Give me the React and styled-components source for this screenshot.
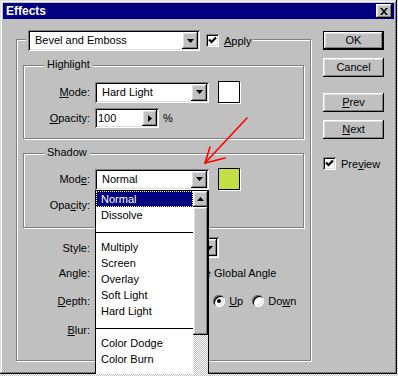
import React from "react";
import styled, { createGlobalStyle, css } from "styled-components";

const GlobalStyle = createGlobalStyle`
  html, body { margin: 0; padding: 0; }
  body {
    width: 398px; height: 376px; overflow: hidden;
    background: repeating-conic-gradient(#c0c0c0 0 25%, #ffffff 0 50%) 0 0 / 2px 2px;
    font-family: "Liberation Sans", Arial, sans-serif;
    font-size: 11px; color: #000;
  }
`;

const raised = css`
  background: #c0c0c0;
  box-shadow: inset -1px -1px #000, inset 1px 1px #fff, inset -2px -2px #808080, inset 2px 2px #dfdfdf;
`;
const sunken = css`
  box-shadow: inset 1px 1px #808080, inset -1px -1px #fff, inset 2px 2px #000, inset -2px -2px #dfdfdf;
`;
const etched = css`
  border: 1px solid #808080;
  box-shadow: inset 1px 1px #fff, 1px 1px #fff;
`;

const Window = styled.div`
  position: relative;
  width: 397px; height: 374px; box-sizing: border-box; padding: 3px;
  background: #c0c0c0;
  box-shadow: inset -1px -1px #000, inset 1px 1px #dfdfdf, inset -2px -2px #808080, inset 2px 2px #fff;
  overflow: hidden;
`;
const TitleBar = styled.div`
  height: 16px; background: #000080;
  display: flex; align-items: center; justify-content: space-between;
  padding: 0 2px 0 3px;
`;
const Title = styled.span`
  color: #fff; font-weight: bold; font-size: 12px; line-height: 16px;
`;
const CloseButton = styled.div`
  ${raised};
  width: 16px; height: 14px; display: grid; place-items: center;
`;
const Body = styled.div`
  display: flex;
`;
const Main = styled.div`
  width: 320px; box-sizing: border-box; padding: 20px 0 0 13px;
`;
const Side = styled.div`
  width: 61px; padding-top: 12px; display: flex; flex-direction: column;
`;
const OuterGroup = styled.div`
  ${etched};
  position: relative; box-sizing: border-box;
  width: 295px; height: 322px; padding: 25px 6px 0 6px;
`;
const GroupHeader = styled.div`
  position: absolute; top: -10px; left: 9px;
  display: flex; align-items: center;
  padding: 0 1px 0 2px; background: #c0c0c0;
`;
const SubGroup = styled.div`
  ${etched};
  position: relative; box-sizing: border-box;
  width: 281px; height: ${p => p.$h}px; padding-top: ${p => p.$pt}px;
  margin-top: ${p => p.$mt || 0}px;
`;
const Legend = styled.span`
  position: absolute; top: -8px; left: 20px;
  padding: 0 3px; background: #c0c0c0; line-height: 13px;
`;
const FieldGrid = styled.div`
  display: grid; grid-template-columns: 66px auto;
  column-gap: 5px; row-gap: 5px; align-items: center;
`;
const Row = styled.div`
  display: grid; grid-template-columns: 66px auto; column-gap: 5px;
  align-items: center; margin-top: ${p => p.$mt}px; padding-left: 1px;
`;
const Lower = styled.div`
  margin-top: 9px;
`;
const FieldLabel = styled.span`
  text-align: right; white-space: nowrap;
`;
const Key = styled.u`
  text-decoration: underline;
`;
const Inline = styled.div`
  display: flex; align-items: center; position: relative;
`;
const ComboBox = styled.div`
  ${sunken};
  position: relative;
  width: ${p => p.$w}px; height: 21px; box-sizing: border-box; padding: 2px;
  background: #fff; display: flex;
`;
const ComboValue = styled.span`
  flex: 1; padding-left: 5px; line-height: 17px; white-space: nowrap; overflow: hidden;
`;
const ArrowButton = styled.span`
  ${raised};
  width: 16px; height: 17px; display: grid; place-items: center; flex: none;
`;
const Swatch = styled.div`
  width: 22px; height: 22px; box-sizing: border-box; margin-left: 9px;
  background: ${p => p.$color};
  border: 1px solid #000;
  box-shadow: 1px 1px 0 #fff;
`;
const SpinBox = styled.div`
  ${sunken};
  width: ${p => p.$w}px; height: 20px; box-sizing: border-box; padding: 2px;
  background: #fff; display: flex;
`;
const SpinValue = styled.span`
  flex: 1; padding-left: 1px; line-height: 16px;
`;
const SpinButton = styled.span`
  ${raised};
  width: 15px; height: 16px; display: grid; place-items: center;
`;
const Unit = styled.span`
  margin-left: ${p => p.$ml}px; white-space: nowrap;
`;
const CheckRow = styled.label`
  display: flex; align-items: center; gap: 5px;
  margin-left: ${p => p.$ml || 0}px; margin-top: ${p => p.$mt || 0}px;
  white-space: nowrap;
`;
const CheckBoxBox = styled.span`
  ${sunken};
  width: 13px; height: 13px; background: #fff; display: grid; place-items: center; flex: none;
`;
const RadioRow = styled.label`
  display: flex; align-items: center; gap: 4px;
  margin-left: ${p => p.$ml || 0}px; white-space: nowrap;
`;
const RadioDot = styled.span`
  width: 12px; height: 12px; border-radius: 50%; background: #fff; flex: none;
  box-shadow: inset 1px 1px #808080, inset -1px -1px #fff, inset 2px 2px #000, inset -2px -2px #dfdfdf;
  display: grid; place-items: center;
  &::after {
    content: ""; width: 4px; height: 4px; border-radius: 50%;
    background: ${p => (p.$on ? "#000" : "transparent")};
  }
`;
const Button = styled.div`
  ${raised};
  width: 61px; height: 19px; box-sizing: border-box;
  display: grid; place-items: center; line-height: 1;
  margin-top: ${p => p.$mt || 0}px;
  ${p => p.$default && css`
    box-shadow: inset 0 0 0 1px #000, inset -2px -2px #000, inset 2px 2px #fff,
      inset -3px -3px #808080, inset 3px 3px #dfdfdf;
  `}
`;
const ListBox = styled.div`
  position: absolute; top: 22px; left: 0; z-index: 5;
  width: 114px; height: 200px; box-sizing: border-box;
  border: 1px solid #000; background: #fff; display: flex;
`;
const ListItems = styled.div`
  flex: 1; display: flex; flex-direction: column;
`;
const ListItem = styled.div`
  height: 16px; line-height: 16px; padding-left: 5px; white-space: nowrap; flex: none;
  ${p => p.$selected && css`
    background: #000080; color: #fff;
    outline: 1px dotted #ffff80; outline-offset: -1px;
  `}
`;
const ListSeparator = styled.div`
  height: 16px; position: relative; flex: none;
  &::after { content: ""; position: absolute; left: 0; right: 0; top: 9px; height: 1px; background: #000; }
`;
const ScrollBar = styled.div`
  width: 15px; display: flex; flex-direction: column;
  background: repeating-conic-gradient(#c0c0c0 0 25%, #ffffff 0 50%) 0 0 / 2px 2px;
`;
const ScrollArrow = styled.div`
  ${raised};
  height: 16px; display: grid; place-items: center;
`;
const ScrollThumb = styled.div`
  ${raised};
  height: 128px;
`;
const Annotation = styled.svg`
  position: absolute; left: 0; top: 0; pointer-events: none; z-index: 10;
`;

const DownTri = () => (
  <svg width="7" height="4" viewBox="0 0 7 4"><path d="M0 0h7L3.5 4z" fill="#000" /></svg>
);
const UpTri = () => (
  <svg width="7" height="4" viewBox="0 0 7 4"><path d="M0 4h7L3.5 0z" fill="#000" /></svg>
);
const RightTri = () => (
  <svg width="4" height="7" viewBox="0 0 4 7"><path d="M0 0v7l4-3.5z" fill="#000" /></svg>
);
const CheckMark = () => (
  <svg width="9" height="9" viewBox="0 0 9 9">
    <path d="M1 3.5l2.5 2.5L8 1.5" stroke="#000" strokeWidth="2.2" fill="none" />
  </svg>
);
const CloseGlyph = () => (
  <svg width="8" height="7" viewBox="0 0 8 7">
    <path d="M0 0h2l2 2.3L6 0h2L5 3.5 8 7H6L4 4.7 2 7H0l3-3.5z" fill="#000" />
  </svg>
);

const Combo = ({ w, value }) => (
  <ComboBox $w={w}>
    <ComboValue>{value}</ComboValue>
    <ArrowButton><DownTri /></ArrowButton>
  </ComboBox>
);
const Spin = ({ w = 64, value }) => (
  <SpinBox $w={w}>
    <SpinValue>{value}</SpinValue>
    <SpinButton><RightTri /></SpinButton>
  </SpinBox>
);
const Check = ({ checked, ml, mt, children }) => (
  <CheckRow $ml={ml} $mt={mt}>
    <CheckBoxBox>{checked && <CheckMark />}</CheckBoxBox>
    <span>{children}</span>
  </CheckRow>
);

const modes = [
  "Normal", "Dissolve", "-", "Multiply", "Screen", "Overlay", "Soft Light", "Hard Light",
  "-", "Color Dodge", "Color Burn",
];

export default function App() {
  return (
    <>
      <GlobalStyle />
      <Window>
        <TitleBar>
          <Title>Effects</Title>
          <CloseButton><CloseGlyph /></CloseButton>
        </TitleBar>
        <Body>
          <Main>
            <OuterGroup>
              <GroupHeader>
                <Combo w={172} value="Bevel and Emboss" />
                <Check checked ml={6}><Key>A</Key>pply</Check>
              </GroupHeader>

              <SubGroup $h={74} $pt={15}>
                <Legend>Highlight</Legend>
                <FieldGrid>
                  <FieldLabel><Key>M</Key>ode:</FieldLabel>
                  <Inline>
                    <Combo w={114} value="Hard Light" />
                    <Swatch $color="#ffffff" />
                  </Inline>
                  <FieldLabel><Key>O</Key>pacity:</FieldLabel>
                  <Inline>
                    <Spin value="100" />
                    <Unit $ml={4}>%</Unit>
                  </Inline>
                </FieldGrid>
              </SubGroup>

              <SubGroup $h={75} $pt={14} $mt={14}>
                <Legend>Shadow</Legend>
                <FieldGrid>
                  <FieldLabel>Mod<Key>e</Key>:</FieldLabel>
                  <Inline>
                    <Combo w={114} value="Normal" />
                    <Swatch $color="#c4df46" />
                    <ListBox>
                      <ListItems>
                        {modes.map((m, i) =>
                          m === "-" ? (
                            <ListSeparator key={i} />
                          ) : (
                            <ListItem key={i} $selected={i === 0}>{m}</ListItem>
                          )
                        )}
                      </ListItems>
                      <ScrollBar>
                        <ScrollArrow><UpTri /></ScrollArrow>
                        <ScrollThumb />
                      </ScrollBar>
                    </ListBox>
                  </Inline>
                  <FieldLabel>Opa<Key>c</Key>ity:</FieldLabel>
                  <Inline>
                    <Spin value="75" />
                    <Unit $ml={4}>%</Unit>
                  </Inline>
                </FieldGrid>
              </SubGroup>

              <Lower>
                <Row $mt={0}>
                  <FieldLabel>Style:</FieldLabel>
                  <Inline><Combo w={124} value="Inner Bevel" /></Inline>
                </Row>
                <Row $mt={5}>
                  <FieldLabel>An<Key>g</Key>le:</FieldLabel>
                  <Inline>
                    <Spin w={40} value="120" />
                    <Unit $ml={3}>°</Unit>
                    <Check checked ml={31}><Key>U</Key>se Global Angle</Check>
                  </Inline>
                </Row>
                <Row $mt={8}>
                  <FieldLabel><Key>D</Key>epth:</FieldLabel>
                  <Inline>
                    <Spin w={40} value="5" />
                    <Unit $ml={3}>pixels</Unit>
                    <RadioRow $ml={47}><RadioDot $on /><span><Key>U</Key>p</span></RadioRow>
                    <RadioRow $ml={9}><RadioDot /><span>Do<Key>w</Key>n</span></RadioRow>
                  </Inline>
                </Row>
                <Row $mt={9}>
                  <FieldLabel><Key>B</Key>lur:</FieldLabel>
                  <Inline>
                    <Spin w={40} value="5" />
                    <Unit $ml={3}>pixels</Unit>
                  </Inline>
                </Row>
              </Lower>
            </OuterGroup>
          </Main>

          <Side>
            <Button $default>OK</Button>
            <Button $mt={8}>Cancel</Button>
            <Button $mt={16}><span><Key>P</Key>rev</span></Button>
            <Button $mt={8}><span><Key>N</Key>ext</span></Button>
            <Check checked ml={0} mt={18}>Pre<Key>v</Key>iew</Check>
          </Side>
        </Body>

        <Annotation width="397" height="374" viewBox="0 0 397 374">
          <g stroke="#ff0000" strokeWidth="1.6" fill="none" strokeLinecap="round">
            <path d="M247 118 L205 163" />
            <path d="M205 163 L210 147" />
            <path d="M205 163 L225 158" />
          </g>
        </Annotation>
      </Window>
    </>
  );
}
